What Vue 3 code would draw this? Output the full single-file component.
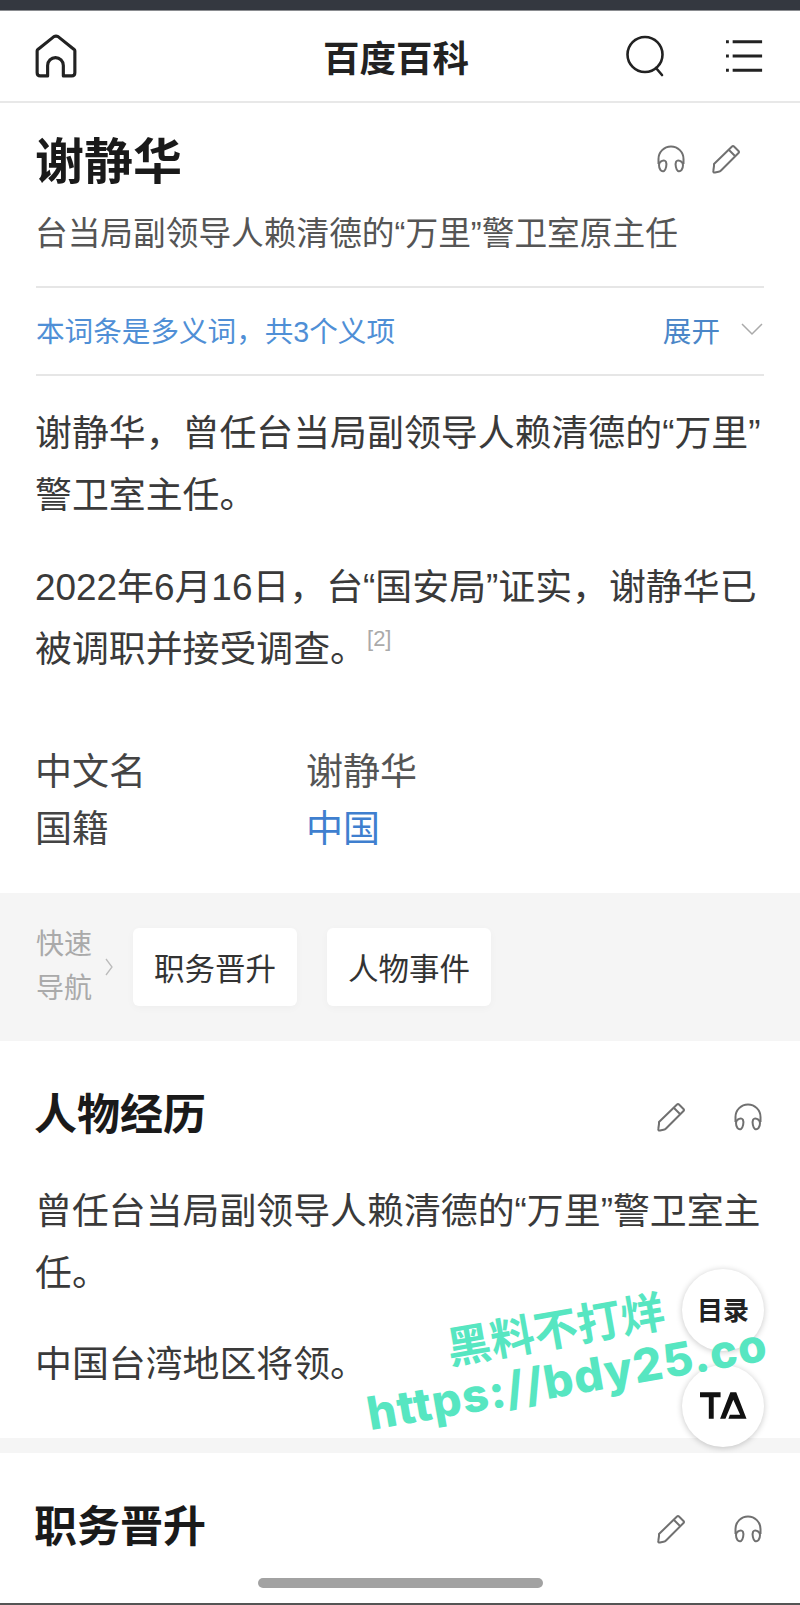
<script setup>
const navItems = ['职务晋升', '人物事件']
</script>

<template>
  <div class="page">
    <div class="status"></div>
    <header class="topbar">
      <svg class="home" viewBox="0 0 40 42" fill="none" stroke="#222" stroke-width="3" stroke-linejoin="round">
        <path d="M2 16Q2 15 3 14.500L18 2.500Q20 1.500 22 2.500L37 14.500Q38 15 38 16V37Q38 40 35 40H27V30a7.500 7.500 0 0 0-15 0V40H5Q2 40 2 37Z" />
      </svg>
      <div class="brand">百度百科</div>
      <svg class="search" viewBox="0 0 42 42" fill="none" stroke="#222" stroke-width="2.600" stroke-linecap="round">
        <circle cx="20" cy="19.500" r="17.500" />
        <path d="M31 33 37 40" />
      </svg>
      <svg class="menu" viewBox="0 0 40 36" fill="none" stroke="#222" stroke-width="3">
        <path d="M7 3H38M7 18H38M7 33H38" />
        <path d="M0 3H3M0 18H3M0 33H3" />
      </svg>
    </header>

    <section class="intro">
      <div class="title-row">
        <h1>谢静华</h1>
        <div class="tools first">
          <svg class="ico" viewBox="0 0 30 30" fill="none" stroke="#707070" stroke-width="2">
            <path d="M2.500 20V15a12.500 12.500 0 0 1 25 0v5" />
            <path d="M3 21c0-4 6-6 7-3 1 2 0 8-2 9-3 1-5-2-5-6ZM27 21c0-4-6-6-7-3-1 2 0 8 2 9 3 1 5-2 5-6Z" />
          </svg>
          <svg class="ico" viewBox="0 0 30 30" fill="none" stroke="#707070" stroke-width="2" stroke-linejoin="round">
            <path d="M3 20 21 2.500Q22 1.500 23 2.500L27.500 7Q28.500 8 27.500 9L10 26.500Q9 27.500 7.500 27.800L4 28.500Q2 28.800 2.300 27L3 22Z" />
            <path d="M18 6 24 12" />
          </svg>
        </div>
      </div>
      <p class="desc">台当局副领导人赖清德的“万里”警卫室原主任</p>
      <div class="poly">
        <span>本词条是多义词，共3个义项</span>
        <span class="expand">展开
          <svg viewBox="0 0 24 14" fill="none" stroke="#aaa" stroke-width="1.500"><path d="M2 2 12 12 22 2" /></svg>
        </span>
      </div>
      <p class="para">谢静华，曾任台当局副领导人赖清德的“万里”<br />警卫室主任。</p>
      <p class="para">2022年6月16日，台“国安局”证实，谢静华已被调职并接受调查。<sup>[2]</sup></p>
      <dl class="info">
        <div class="info-row"><dt>中文名</dt><dd>谢静华</dd></div>
        <div class="info-row"><dt>国籍</dt><dd class="link">中国</dd></div>
      </dl>
    </section>

    <nav class="quick">
      <div class="quick-label">快速<br />导航</div>
      <svg class="quick-arrow" viewBox="0 0 10 20" fill="none" stroke="#bbb" stroke-width="1.300"><path d="M2 2 8 10 2 18" /></svg>
      <a v-for="item in navItems" :key="item" class="chip">{{ item }}</a>
    </nav>

    <section class="block">
      <div class="section-head">
        <h2>人物经历</h2>
        <div class="tools">
          <svg class="ico" viewBox="0 0 30 30" fill="none" stroke="#707070" stroke-width="2" stroke-linejoin="round">
            <path d="M3 20 21 2.500Q22 1.500 23 2.500L27.500 7Q28.500 8 27.500 9L10 26.500Q9 27.500 7.500 27.800L4 28.500Q2 28.800 2.300 27L3 22Z" />
            <path d="M18 6 24 12" />
          </svg>
          <svg class="ico" viewBox="0 0 30 30" fill="none" stroke="#707070" stroke-width="2">
            <path d="M2.500 20V15a12.500 12.500 0 0 1 25 0v5" />
            <path d="M3 21c0-4 6-6 7-3 1 2 0 8-2 9-3 1-5-2-5-6ZM27 21c0-4-6-6-7-3-1 2 0 8 2 9 3 1 5-2 5-6Z" />
          </svg>
        </div>
      </div>
      <p class="para">曾任台当局副领导人赖清德的“万里”警卫室主任。</p>
      <p class="para">中国台湾地区将领。</p>
    </section>

    <div class="divider"></div>

    <section class="block next">
      <div class="section-head">
        <h2>职务晋升</h2>
        <div class="tools">
          <svg class="ico" viewBox="0 0 30 30" fill="none" stroke="#707070" stroke-width="2" stroke-linejoin="round">
            <path d="M3 20 21 2.500Q22 1.500 23 2.500L27.500 7Q28.500 8 27.500 9L10 26.500Q9 27.500 7.500 27.800L4 28.500Q2 28.800 2.300 27L3 22Z" />
            <path d="M18 6 24 12" />
          </svg>
          <svg class="ico" viewBox="0 0 30 30" fill="none" stroke="#707070" stroke-width="2">
            <path d="M2.500 20V15a12.500 12.500 0 0 1 25 0v5" />
            <path d="M3 21c0-4 6-6 7-3 1 2 0 8-2 9-3 1-5-2-5-6ZM27 21c0-4-6-6-7-3-1 2 0 8 2 9 3 1 5-2 5-6Z" />
          </svg>
        </div>
      </div>
    </section>

    <button class="fab toc">目录</button>
    <button class="fab ta">
      <svg viewBox="0 0 48 28" fill="#111">
        <path d="M0 0H21V5H14V27H9V5H0Z" />
        <path d="M31 0H37L47.500 27H29L30.500 23H41L34 7.500 26 27H20.500Z" />
      </svg>
    </button>

    <div class="watermark">
      <div class="wm-cn">黑料不打烊</div>
      <div class="wm-url">https://bdy25.co</div>
    </div>

    <div class="home-bar"></div>
    <div class="bottom-line"></div>
  </div>
</template>

<style scoped>
.page {
  position: relative;
  width: 800px;
  height: 1605px;
  overflow: hidden;
  background: #fff;
  color: #333;
  font-family: "Liberation Sans", "Noto Sans CJK SC", sans-serif;
}

.status {
  height: 10px;
  background: #343840;
  border-bottom: 1px solid #8a8c90;
}

.topbar {
  display: flex;
  align-items: center;
  height: 90px;
  padding: 0 36px 0 35px;
  border-bottom: 2px solid #e8e8e8;
}

.home {
  width: 42px;
  height: 44px;
}

.brand {
  flex: 1;
  text-align: center;
  font-size: 36.5px;
  font-weight: 700;
  color: #222;
  padding-left: 90px;
}

.search {
  width: 42px;
  height: 42px;
  margin-right: 59px;
}

.menu {
  width: 38px;
  height: 36px;
}

.intro {
  padding: 0 36px;
}

.title-row {
  display: flex;
  align-items: center;
  justify-content: space-between;
  height: 108px;
}

h1 {
  margin: 0 0 0 -1px;
  font-size: 49px;
  font-weight: 700;
  color: #1a1a1a;
}

.tools {
  display: flex;
  gap: 47px;
  padding-top: 12px;
  padding-right: 1px;
}

.tools.first {
  gap: 25px;
  padding-top: 4px;
  padding-right: 23px;
}

.ico {
  width: 30px;
  height: 30px;
}

.desc {
  margin: 1px 0 0;
  text-indent: -1px;
  font-size: 32.7px;
  line-height: 44px;
  color: #555;
  padding-bottom: 30px;
  border-bottom: 2px solid #e6e6e6;
  white-space: nowrap;
}

.poly {
  display: flex;
  justify-content: space-between;
  align-items: center;
  height: 82px;
  padding-bottom: 4px;
  font-size: 28.6px;
  color: #4f8fd6;
  border-bottom: 2px solid #e6e6e6;
}

.expand {
  display: flex;
  align-items: center;
  gap: 20px;
  color: #4a86c8;
}

.expand svg {
  width: 24px;
  height: 14px;
}

.para {
  margin: 0 -12px 0 -1px;
  font-size: 36.9px;
  line-height: 62px;
  color: #3a3a3a;
}

.poly + .para {
  margin-top: 27px;
}

.para + .para {
  margin-top: 30px;
}

sup {
  font-size: 22px;
  color: #aaa;
  line-height: 0;
  vertical-align: 16px;
}

.info {
  margin: 59px 0 0 -1px;
}

.info-row {
  display: flex;
  height: 57px;
  align-items: center;
  font-size: 37px;
}

dt {
  width: 271px;
  color: #444;
}

dd {
  margin: 0;
  color: #555;
}

.link {
  color: #3f7fcf;
}

.quick {
  display: flex;
  align-items: center;
  height: 148px;
  margin-top: 39px;
  padding-left: 36px;
  background: #f5f5f5;
}

.quick-label {
  font-size: 28px;
  line-height: 44px;
  color: #aaa;
  width: 68px;
}

.quick-arrow {
  width: 10px;
  height: 20px;
  margin-right: 19px;
}

.chip {
  display: flex;
  align-items: center;
  justify-content: center;
  width: 164px;
  height: 78px;
  margin-right: 30px;
  background: #fff;
  border-radius: 6px;
  font-size: 30.5px;
  color: #333;
  box-shadow: 0 2px 8px rgba(0, 0, 0, 0.03);
}

.block {
  padding: 0 36px;
}

.section-head {
  display: flex;
  align-items: center;
  justify-content: space-between;
  height: 140px;
}

h2 {
  margin: 0 0 0 -2px;
  font-size: 43px;
  font-weight: 700;
  color: #1a1a1a;
}

.block .para + .para {
  margin-top: 29px;
}

.divider {
  height: 15px;
  margin-top: 42px;
  background: #f5f5f5;
}

.next .section-head {
  height: 140px;
}

.fab {
  position: absolute;
  right: 36px;
  width: 82px;
  height: 82px;
  padding: 0;
  border: none;
  border-radius: 50%;
  background: #fff;
  font-family: inherit;
  font-size: 26px;
  font-weight: 700;
  color: #222;
  box-shadow: 0 1px 6px rgba(0, 0, 0, 0.22);
  display: flex;
  align-items: center;
  justify-content: center;
}

.toc {
  top: 1269px;
  padding-bottom: 4px;
}

.ta {
  top: 1365px;
}

.ta svg {
  width: 47px;
  height: 28px;
}

.watermark {
  position: absolute;
  left: 351px;
  top: 1321px;
  width: 420px;
  transform: rotate(-10deg);
  transform-origin: left top;
  color: #57e6c1;
  font-weight: 700;
  pointer-events: none;
}

.wm-cn {
  font-size: 44px;
  line-height: 42px;
  margin-left: 90px;
  margin-top: 24px;
}

.wm-url {
  font-size: 46px;
  line-height: 56px;
  white-space: nowrap;
  font-family: "Inter", sans-serif;
  font-weight: 800;
  letter-spacing: 1px;
}

.home-bar {
  position: absolute;
  left: 258px;
  top: 1578px;
  width: 285px;
  height: 10px;
  border-radius: 5px;
  background: #a2a2a2;
}

.bottom-line {
  position: absolute;
  left: 0;
  right: 0;
  top: 1603px;
  height: 2px;
  background: #555;
}
</style>
